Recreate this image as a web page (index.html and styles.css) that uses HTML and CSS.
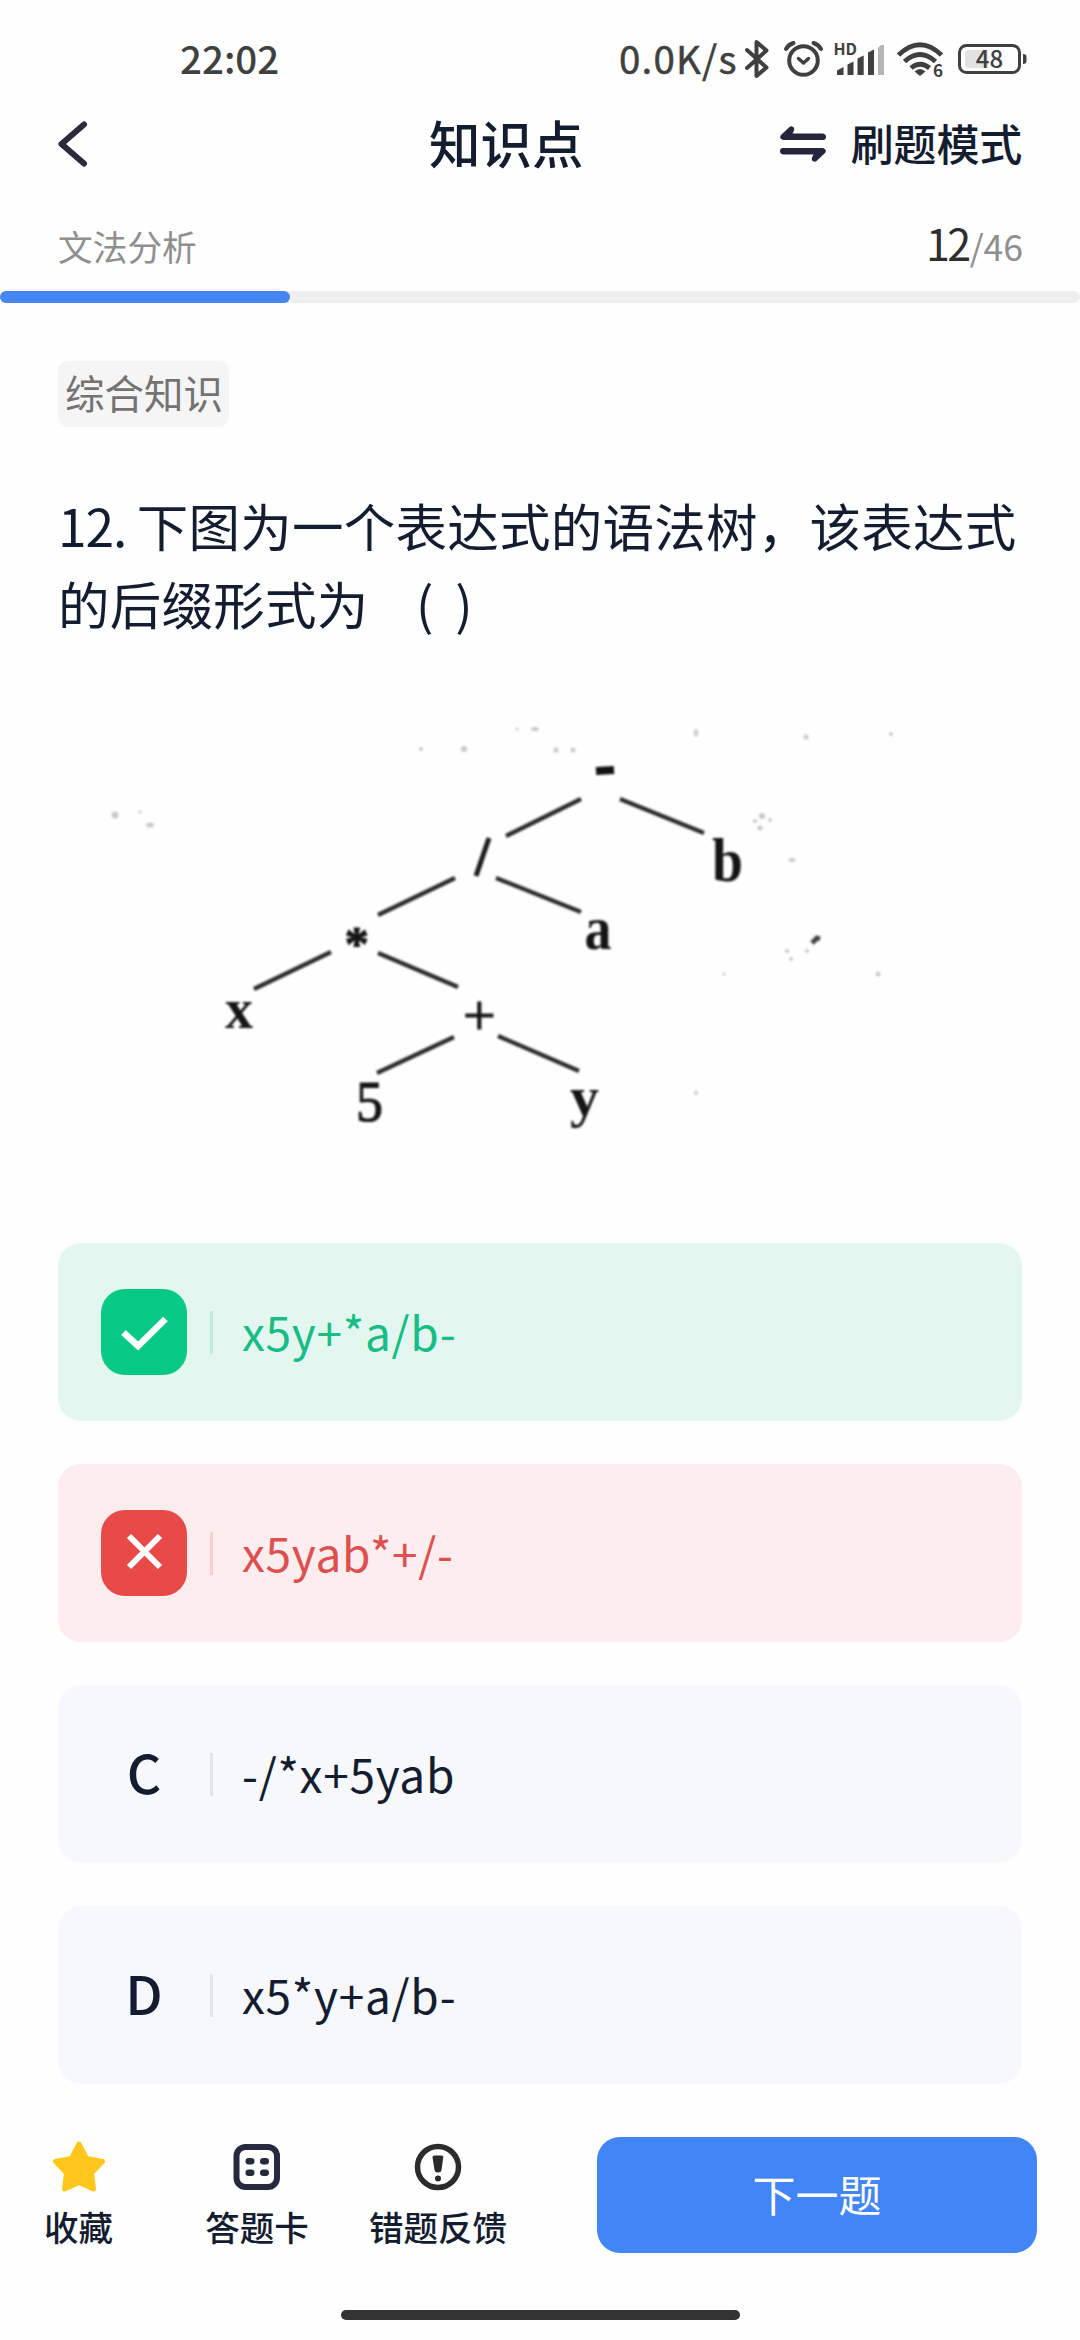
FILE: index.html
```html
<!DOCTYPE html>
<html lang="zh-CN">
<head>
<meta charset="utf-8">
<title>知识点</title>
<link rel="stylesheet" href="styles.css">
</head>
<body>
<div class="screen">
  <div class="status">
    <span class="clock">22:02</span>
    <span class="speed">0.0K/s</span>
    <svg class="status-icons" width="288" height="48" viewBox="740 36 288 48">
      <path d="M747 50 766.500 67.500 756.500 76V42L766.500 50.500 747 68" fill="none" stroke="#404040" stroke-width="4" stroke-linejoin="round" stroke-linecap="round"/>
      <g fill="none" stroke="#404040" stroke-linecap="round">
        <circle cx="803.500" cy="60.500" r="14.300" stroke-width="4"/>
        <path d="M798.500 58.500 803.500 63 808.500 58.500" stroke-width="3.500" stroke-linejoin="round"/>
        <path d="M786 49Q788.500 44.500 793.500 43M821 49Q818.500 44.500 813.500 43" stroke-width="4"/>
      </g>
      <text x="833.500" y="55" class="hd">HD</text>
      <path d="M837 75V70.500L843.500 67V75ZM847.500 75V64.500L853.500 61.500V75ZM857.500 75V58.500L863.700 55.500V75ZM868 75V52.500L874 49.500V75Z" fill="#404040"/>
      <path d="M878 75V48L881 45H884V75Z" fill="#b5b5b5"/>
      <g fill="none" stroke="#404040" stroke-width="4.800">
        <path d="M898.500 55Q920 34.500 941.500 55"/>
        <path d="M904.500 61.500Q920 47.500 935.500 61.500"/>
        <path d="M911 68Q920 60.500 929.500 68"/>
      </g>
      <path d="M914.500 71.500Q920 66.500 925.500 71.500L920 76Z" fill="#404040"/>
      <text x="933" y="77" class="six">6</text>
      <rect x="959.500" y="45.500" width="60" height="27" rx="7" fill="none" stroke="#404040" stroke-width="3"/>
      <path d="M968 50H988V68H968Q965 68 965 65V53Q965 50 968 50Z" fill="#e2e2e2"/>
      <path d="M1023 54Q1026.500 54 1026.500 57V61Q1026.500 64 1023 64Z" fill="#404040"/>
      <text x="989.500" y="68" text-anchor="middle" class="level">48</text>
    </svg>
  </div>

  <header class="header">
    <svg class="back" width="40" height="50" viewBox="0 0 40 50"><path d="M31 5.500 8.500 25 31 44.500" fill="none" stroke="#2a2a3c" stroke-width="6" stroke-linecap="round" stroke-linejoin="round"/></svg>
    <h1 class="title">知识点</h1>
    <div class="mode">
      <svg width="46" height="38" viewBox="0 0 46 38"><g fill="#25253d"><path d="M12 1.500Q15 2 14 5.500L12.500 8.500H43Q46 9 46 12T43 15H3Q-1.500 13.500 1 10L9.500 2Q11 1 12 1.500Z"/><path d="M34 36.500Q31 36 32 32.500L33.500 29.500H3Q0 29 0 26T3 23H43Q47.500 24.500 45 28L36.500 36Q35 37 34 36.500Z"/></g></svg>
      <span>刷题模式</span>
    </div>
  </header>

  <div class="meta">
    <span class="chapter">文法分析</span>
    <span class="count"><b>12</b>/46</span>
  </div>
  <div class="progress"><div class="bar"></div></div>

  <main class="content">
    <span class="tag">综合知识</span>
    <p class="question"><span class="num">12. </span>下图为一个表达式的语法树，该表达式的后缀形式为<span class="lead">&nbsp; &nbsp;</span><span class="blank">( )</span></p>
    <svg class="tree" width="964" height="460" viewBox="58 700 964 460">
      <g class="ink">
        <path class="edges" d="M506 836 581 799M620 799 704 833M455 878 378 915M496 878 581 912M331 952 254 989M378 953 458 987M454 1037 377 1073M498 1036 579 1071"/>
        <path d="M489 838 476 876" stroke="#1c1c1c" stroke-width="5"/>
        <path d="M596 771 614 770" stroke="#111" stroke-width="8"/>
        <text x="712" y="881" class="b" textLength="31" lengthAdjust="spacingAndGlyphs">b</text>
        <text x="584.500" y="949" class="b" textLength="27" lengthAdjust="spacingAndGlyphs">a</text>
        <text x="344.500" y="960" class="star">*</text>
        <text x="225" y="1028" class="b small" textLength="28" lengthAdjust="spacingAndGlyphs">x</text>
        <text x="463" y="1035" class="n">+</text>
        <text x="356" y="1121" class="n" textLength="27" lengthAdjust="spacingAndGlyphs">5</text>
        <text x="570" y="1116" class="b small">y</text>
        <path d="M812 943 817 938 820 939" stroke="#444" stroke-width="5"/>
      </g>
      <g class="specks">
        <circle cx="115" cy="815" r="3.500"/><ellipse cx="150" cy="825" rx="4" ry="2.500"/><circle cx="140" cy="812" r="1.500"/>
        <circle cx="421" cy="749" r="2"/><circle cx="464" cy="749" r="3"/><circle cx="556" cy="750" r="2.500"/><circle cx="573" cy="750" r="2.500"/><ellipse cx="535" cy="729" rx="4" ry="2"/><circle cx="517" cy="729" r="1.500"/>
        <ellipse cx="696" cy="733" rx="2" ry="4"/><circle cx="806" cy="737" r="2.500"/><circle cx="891" cy="734" r="2"/>
        <circle cx="762" cy="816" r="3"/><circle cx="755" cy="821" r="2"/><circle cx="760" cy="828" r="2.500"/><circle cx="770" cy="820" r="2"/>
        <ellipse cx="792" cy="860" rx="3.500" ry="2"/><circle cx="787" cy="951" r="2"/><circle cx="791" cy="959" r="2"/><circle cx="807" cy="951" r="2"/>
        <circle cx="878" cy="974" r="2.500"/><circle cx="724" cy="974" r="1.500"/><circle cx="696" cy="1093" r="2"/>
      </g>
    </svg>

    <ul class="options">
      <li class="option right">
        <span class="mark"><svg width="86" height="86" viewBox="0 0 86 86"><path d="M22.500 43.500 37 57 64.500 30" fill="none" stroke="#fff" stroke-width="6.500"/></svg></span>
        <span class="rule"></span><span class="answer">x5y+*a/b-</span>
      </li>
      <li class="option wrong">
        <span class="mark"><svg width="86" height="86" viewBox="0 0 86 86"><path d="M28 26 59 57M59 26 28 57" fill="none" stroke="#fff" stroke-width="6"/></svg></span>
        <span class="rule"></span><span class="answer">x5yab*+/-</span>
      </li>
      <li class="option">
        <span class="mark">C</span>
        <span class="rule"></span><span class="answer">-/*x+5yab</span>
      </li>
      <li class="option">
        <span class="mark">D</span>
        <span class="rule"></span><span class="answer">x5*y+a/b-</span>
      </li>
    </ul>
  </main>

  <footer class="footer">
    <div class="tool fav">
      <svg width="56" height="52" viewBox="0 0 56 52"><path d="M28 3 35.500 17.500 51.500 20.500 40.500 32 42.500 48 28 41.500 13.500 48 15.500 32 4.500 20.500 20.500 17.500Z" fill="#ffc61c" stroke="#ffc61c" stroke-width="5" stroke-linejoin="round"/></svg>
      <span>收藏</span>
    </div>
    <div class="tool card">
      <svg width="52" height="52" viewBox="0 0 52 52"><rect x="5.500" y="6" width="40.500" height="40" rx="9" fill="none" stroke="#262a3f" stroke-width="6"/><g fill="#262a3f"><rect x="14.500" y="17" width="9" height="6.500" rx="3.200"/><rect x="29" y="17" width="9" height="6.500" rx="3.200"/><rect x="14.500" y="28.500" width="9" height="6.500" rx="3.200"/><rect x="29" y="28.500" width="9" height="6.500" rx="3.200"/></g></svg>
      <span>答题卡</span>
    </div>
    <div class="tool report">
      <svg width="52" height="52" viewBox="0 0 52 52"><circle cx="26" cy="26" r="20.500" fill="none" stroke="#2b2b2b" stroke-width="5.500"/><path d="M20.500 16Q20.500 14.500 22.500 14.500H29.500Q31.500 14.500 31.300 16L29.500 29Q29 31.500 26 31.500T22.500 29Z" fill="#2b2b2b"/><circle cx="26" cy="37.500" r="3" fill="#2b2b2b"/></svg>
      <span>错题反馈</span>
    </div>
    <button class="next">下一题</button>
  </footer>
  <div class="home"></div>
</div>
</body>
</html>
```
FILE: styles.css
```css
* { box-sizing: border-box; }
body {
  margin: 0;
  background: #fefefe;
  color: #141c30;
  font-family: "Noto Sans CJK SC", sans-serif;
}
.screen {
  width: 1080px;
  height: 2340px;
  display: flex;
  flex-direction: column;
  overflow: hidden;
}
.status {
  display: flex;
  align-items: center;
  height: 113px;
  padding: 0 52px 0 180px;
  font-size: 38.500px;
  font-weight: 500;
  color: #404040;
  line-height: 50px;
}
.clock { flex: 1; }
.speed { width: 120px; margin-right: 1px; white-space: nowrap; font-weight: 400; letter-spacing: 1.200px; -webkit-text-stroke: 0.500px #404040; }
.status-icons { margin-top: 7px; }
.status-icons text { fill: #404040; }
.hd { font: 700 16px "Noto Sans CJK SC", sans-serif; }
.six { font: 700 17px "Noto Sans CJK SC", sans-serif; }
.level { font: 500 24px "Noto Sans CJK SC", sans-serif; }

.header {
  display: flex;
  align-items: center;
  height: 58px;
  padding: 0 58px 0 53px;
}
.back { margin-top: 4px; }
.title { margin: 0 0 0 336px; font-size: 51.500px; font-weight: 500; line-height: 58px; }
.mode { display: flex; align-items: center; gap: 25px; margin-left: auto; font-size: 43px; font-weight: 500; line-height: 58px; }
.mode svg { margin-top: 3px; }
.mode span { letter-spacing: -0.200px; }

.meta {
  display: flex;
  justify-content: space-between;
  align-items: baseline;
  height: 60px;
  margin-top: 41px;
  padding: 0 57px 0 58px;
  line-height: 60px;
  color: #8f8f8f;
}
.chapter { font-size: 34.700px; }
.count { font-size: 35.500px; }
.count b { font-size: 43px; font-weight: 400; color: #2e2e2e; letter-spacing: -2.500px; margin-right: 1px; }
.progress { height: 12px; margin-top: 19px; border-radius: 6px; background: #eee; }
.bar { width: 290px; height: 12px; border-radius: 6px; background: #4686f2; }

.content { padding: 58px 58px 0; }
.tag {
  display: block;
  width: 171px;
  height: 66px;
  padding-left: 7px;
  border-radius: 10px;
  background: #f5f5f5;
  color: #737373;
  font-size: 39.500px;
  line-height: 61px;
  white-space: nowrap;
}
.question {
  height: 155px;
  margin: 59px -10px 0 0;
  font-size: 51.500px;
  line-height: 77.500px;
  letter-spacing: 0.250px;
}
.num { letter-spacing: -1.100px; }
.lead { word-spacing: 4px; }
.blank { word-spacing: 10px; }
.tree { display: block; margin-top: 59px; }
.ink { filter: blur(0.900px); }
.edges { fill: none; stroke: #2a2a2a; stroke-width: 4.200; }
.ink text { fill: #141414; font-family: "Liberation Serif", serif; }
.ink .b { font-size: 61px; font-weight: 700; }
.ink .small { font-size: 58px; }
.ink .n { font-size: 58px; stroke: #141414; stroke-width: 1.200px; }
.ink .star { font-size: 49px; font-weight: 700; stroke: #141414; stroke-width: 1px; }
.specks { fill: #c9c9c9; filter: blur(1.200px); }

.options { display: flex; flex-direction: column; gap: 43px; margin: 83px 0 0; padding: 0; list-style: none; }
.option { display: flex; align-items: center; height: 178px; padding-left: 43px; border-radius: 23px; background: #f6f8fc; }
.mark { width: 86px; height: 86px; border-radius: 24px; font-size: 53.500px; font-weight: 500; line-height: 80px; text-align: center; }
.mark svg { display: block; }
.rule { width: 3px; height: 43px; margin: 0 29px 0 23px; background: #e2e4e8; }
.answer { font-size: 46px; line-height: 60px; margin-top: -3px; letter-spacing: 0.700px; }
.right { background: #e3f7f0; color: #17bd84; }
.right .mark { background: #06c986; }
.right .rule { background: #bfe9da; }
.wrong { background: #fdedee; color: #dc514f; }
.wrong .mark { background: #e84a47; }
.wrong .rule { background: #f7cfd0; }

.footer { display: flex; height: 116px; margin-top: 53px; padding: 0 43px 0 45px; }
.tool { display: flex; flex-direction: column; align-items: center; gap: 11px; padding-top: 4px; font-size: 34.500px; font-weight: 500; line-height: 44px; white-space: nowrap; }
.fav { width: 67px; }
.card { width: 104px; margin-left: 93px; }
.report { width: 138px; margin-left: 60px; }
.next {
  width: 440px;
  height: 116px;
  margin: 0 0 0 90px;
  padding: 0 0 4px;
  flex: none;
  border: 0;
  border-radius: 23px;
  background: #4285f4;
  color: #fff;
  font: 400 43px/60px "Noto Sans CJK SC", sans-serif;
}
.home { width: 399px; height: 10px; margin: 57px auto 0; border-radius: 5px; background: #333; }
```
